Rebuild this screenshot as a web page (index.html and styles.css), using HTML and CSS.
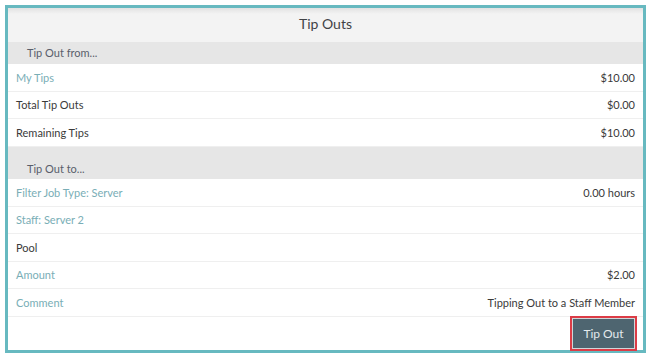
FILE: index.html
```html
<!DOCTYPE html>
<html lang="en">
  <head>
    <meta charset="UTF-8">
    <title>Tip Outs</title>
    <link rel="stylesheet" href="styles.css">
  </head>
  <body>

<div class="panel">
  <h1 class="title">Tip Outs</h1>

  <div class="section">Tip Out from...</div>
  <div class="row"><span class="label link">My Tips</span><span class="value">$10.00</span></div>
  <div class="row"><span class="label">Total Tip Outs</span><span class="value">$0.00</span></div>
  <div class="row"><span class="label">Remaining Tips</span><span class="value">$10.00</span></div>

  <div class="section section-tall">Tip Out to...</div>
  <div class="row"><span class="label link">Filter Job Type: Server</span><span class="value">0.00 hours</span></div>
  <div class="row"><span class="label link">Staff: Server 2</span><span class="value"></span></div>
  <div class="row"><span class="label">Pool</span><span class="value"></span></div>
  <div class="row"><span class="label link">Amount</span><span class="value">$2.00</span></div>
  <div class="row"><span class="label link">Comment</span><span class="value">Tipping Out to a Staff Member</span></div>

  <div class="actions">
    <button class="btn" type="button">Tip Out</button>
  </div>
</div>

  </body>
</html>
```

FILE: styles.css
```css
*, ::before, ::after { box-sizing: border-box; }
html { font-family: "Lato", "Liberation Sans", sans-serif; }
body { margin: 0; background: #fff; }

.panel {
  margin: 5px;
  width: 641px;
  height: 348px;
  border: 3px solid #67b9c0;
  background: #fff;
  display: flex;
  flex-direction: column;
}

.title {
  margin: 0;
  height: 34px;
  line-height: 32px;
  text-align: center;
  font-size: 14px;
  font-weight: normal;
  color: #3f4246;
  background: linear-gradient(#e2e2e2, #f3f3f3 6px, #f3f3f3);
}

.section {
  height: 22px;
  padding: 0 19px;
  line-height: 22px;
  font-size: 11px;
  color: #595e6b;
  background: #e6e6e6;
}
.section-tall {
  height: 32.5px;
  padding-top: 11px;
}

.row {
  display: flex;
  justify-content: space-between;
  align-items: center;
  height: 27.5px;
  padding: 0 8px;
  border-bottom: 1px solid #efefef;
  font-size: 11px;
  color: #3a3a3a;
}
.label.link {
  color: #79aeb6;
}
.value {
  color: #3a3a3a;
}

.actions {
  flex: 1;
  display: flex;
  justify-content: flex-end;
  align-items: flex-start;
  padding: 1px 8px 0 0;
}

.btn {
  width: 63px;
  height: 31px;
  border: 1px solid #cfd6d9;
  border-radius: 0;
  box-shadow: 0 0 0 2px #dc3c46;
  background: #4e6570;
  color: #e4eaec;
  font-family: inherit;
  font-size: 12px;
  cursor: pointer;
}
```
